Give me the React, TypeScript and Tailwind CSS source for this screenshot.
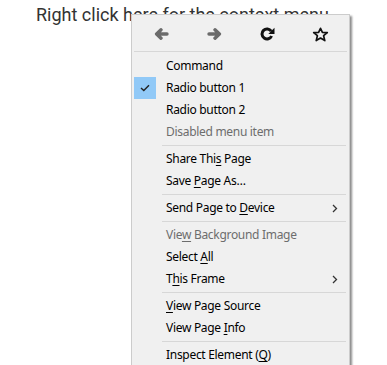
import React from "react";

const U = ({ children }: { children: React.ReactNode }) => (
  <span className="underline underline-offset-2 decoration-1">{children}</span>
);

const Sep = () => <div className="h-px bg-[#d7d7d7] ml-[28px] mr-px my-[2px]" />;

const Chevron = () => (
  <svg width="6" height="9" viewBox="0 0 6 9" className="mr-[9px]">
    <path d="M1 1 L4.5 4.5 L1 8" fill="none" stroke="#333" strokeWidth="1.3" />
  </svg>
);

function Item({
  children,
  disabled,
  checked,
  sub,
}: {
  children: React.ReactNode;
  disabled?: boolean;
  checked?: boolean;
  sub?: boolean;
}) {
  return (
    <div className={`flex items-center h-[22px] ${disabled ? "text-[#6d6d6d]" : "text-black"}`}>
      <div className={`w-[22px] h-[22px] flex items-center justify-center ${checked ? "bg-[#91c9f7]" : ""}`}>
        {checked && (
          <svg width="10" height="8" viewBox="0 0 10 8">
            <path d="M1 4 L3.8 6.6 L9 1.2" fill="none" stroke="#222" strokeWidth="1.4" />
          </svg>
        )}
      </div>
      <div className="ml-[10px] flex-1 whitespace-nowrap">{children}</div>
      {sub && <Chevron />}
    </div>
  );
}

export default function App() {
  return (
    <div className="relative w-[387px] h-[365px] bg-white overflow-hidden">
      <div
        className="absolute left-[36px] top-[1px] text-[18px] text-[#333333] whitespace-nowrap"
        style={{ fontFamily: "Roboto, sans-serif" }}
      >
        Right click here for the context menu
      </div>
      <div
        className="absolute left-[131px] top-[14px] w-[219px] bg-[#f0f0f0] border border-[#cccccc] p-[2px] shadow-[2px_2px_2px_rgba(0,0,0,0.45)] text-[12px] tracking-[-0.3px]"
        style={{ fontFamily: '"Noto Sans", "Open Sans", sans-serif' }}
      >
        <div className="flex items-center h-[34px]">
          <div className="w-[53px] flex justify-center ml-[1px]">
            <svg width="15" height="12" viewBox="0 0 15 12">
              <path
                d="M13 6 H3 M7 1.8 L2.6 6 L7 10.2"
                fill="none"
                stroke="#6b6b6b"
                strokeWidth="3.4"
                strokeLinecap="round"
                strokeLinejoin="round"
              />
            </svg>
          </div>
          <div className="w-[53px] flex justify-center">
            <svg width="15" height="12" viewBox="0 0 15 12">
              <path
                d="M2 6 H12 M8 1.8 L12.4 6 L8 10.2"
                fill="none"
                stroke="#6b6b6b"
                strokeWidth="3.4"
                strokeLinecap="round"
                strokeLinejoin="round"
              />
            </svg>
          </div>
          <div className="w-[53px] flex justify-center">
            <svg width="15" height="14" viewBox="0 0 15 14">
              <path
                d="M11.2 4.2 A5 5 0 1 0 11.6 9"
                fill="none"
                stroke="#111"
                strokeWidth="3"
              />
              <path d="M14.5 0.8 L14.5 7 L8.3 7 Z" fill="#111" />
            </svg>
          </div>
          <div className="w-[53px] flex justify-center">
            <svg width="17" height="15" viewBox="0 0 17 15">
              <path
                d="M8.5 1.3 L10.4 5.3 L15.3 5.6 L11.6 8.7 L12.8 13.6 L8.5 11 L4.2 13.6 L5.4 8.7 L1.7 5.6 L6.6 5.3 Z"
                fill="none"
                stroke="#111"
                strokeWidth="1.7"
                strokeLinejoin="round"
              />
            </svg>
          </div>
        </div>
        <div className="h-px bg-[#d7d7d7] mb-[3px]" />
        <Item>Command</Item>
        <Item checked>Radio button 1</Item>
        <Item>Radio button 2</Item>
        <Item disabled>Disabled menu item</Item>
        <Sep />
        <Item>
          Share Thi<U>s</U> Page
        </Item>
        <Item>
          Save <U>P</U>age As…
        </Item>
        <Sep />
        <Item sub>
          Send Page to <U>D</U>evice
        </Item>
        <Sep />
        <Item disabled>
          Vie<U>w</U> Background Image
        </Item>
        <Item>
          Select <U>A</U>ll
        </Item>
        <Item sub>
          T<U>h</U>is Frame
        </Item>
        <Sep />
        <Item>
          <U>V</U>iew Page Source
        </Item>
        <Item>
          View Page <U>I</U>nfo
        </Item>
        <Sep />
        <Item>
          Inspect Element (<U>Q</U>)
        </Item>
      </div>
    </div>
  );
}
